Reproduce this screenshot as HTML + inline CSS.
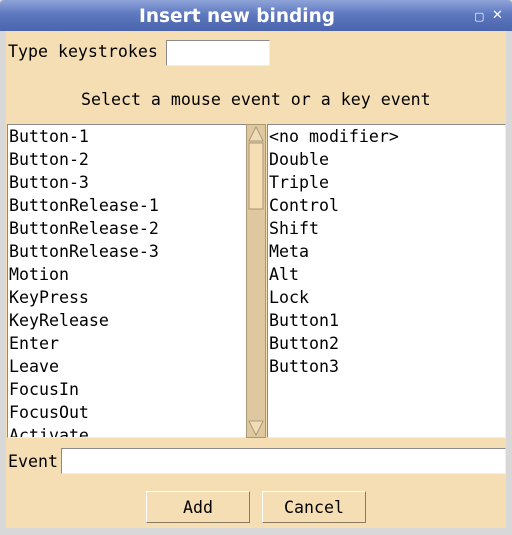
<!DOCTYPE html>
<html><head><style>
*{margin:0;padding:0;box-sizing:border-box}
body{width:512px;height:535px;overflow:hidden;background:#d8d8d8;font-family:"DejaVu Sans Mono","Liberation Mono",monospace;font-size:16.6px;color:#000;position:relative}
.title{position:absolute;left:0;top:0;width:512px;height:31px;background:linear-gradient(#8ea3d8,#5f79c0 45%,#4a64ad);border-radius:4px 4px 0 0}
.tt{position:absolute;left:0;width:474px;top:1px;text-align:center;color:#fff;font-family:"DejaVu Sans",sans-serif;font-weight:bold;font-size:18.5px;line-height:31px}
.ctl{position:absolute;top:9px;color:#fff;font-size:13px;font-family:"DejaVu Sans",sans-serif;line-height:13px}
.main{position:absolute;left:6px;top:31px;width:500px;height:497px;background:#f5deb3}
.abs{position:absolute;white-space:pre}
.entry{position:absolute;background:#fff;border:1px solid #8a8a8a;border-right-color:#eee;border-bottom-color:#eee}
.list{position:absolute;background:#fff;border:1px solid #8a8a8a;border-right-color:#eee;border-bottom-color:#eee;overflow:hidden;padding-top:1px}
.list div{height:23px;line-height:22px;padding-left:1px;white-space:pre}
.btn{position:absolute;top:460px;width:104px;height:32px;border:1px solid #fff;border-right-color:#8a7a60;border-bottom-color:#8a7a60;text-align:center;line-height:32px}
</style></head><body>
<div class="title"><div class="tt">Insert new binding</div></div>
<div class="ctl" style="left:474px;font-size:11px;top:10px">▢</div>
<div class="ctl" style="left:492px">✕</div>
<div class="main">
 <div class="abs" style="left:2px;top:9px;line-height:24px">Type keystrokes</div>
 <div class="entry" style="left:160px;top:9px;width:104px;height:26px"></div>
 <div class="abs" style="left:75px;top:57px;line-height:24px">Select a mouse event or a key event</div>
 <div class="list" style="left:1px;top:93px;width:240px;height:314px">
  <div>Button-1</div><div>Button-2</div><div>Button-3</div><div>ButtonRelease-1</div><div>ButtonRelease-2</div><div>ButtonRelease-3</div><div>Motion</div><div>KeyPress</div><div>KeyRelease</div><div>Enter</div><div>Leave</div><div>FocusIn</div><div>FocusOut</div><div>Activate</div>
 </div>
 <div style="position:absolute;left:240px;top:93px;width:20px;height:314px;background:#dfc8a0;border:1px solid #a89878">
  <svg width="18" height="312" style="position:absolute;left:0;top:0">
   <polygon points="9,2 16,16 2,16" fill="#efdcb8" stroke="#9a8a6a" stroke-width="0.8"/>
   <rect x="2" y="18" width="14" height="66" fill="#f5deb3" stroke="#a89878"/>
   <polygon points="2,296 16,296 9,310" fill="#efdcb8" stroke="#9a8a6a" stroke-width="0.8"/>
  </svg>
 </div>
 <div class="list" style="left:261px;top:93px;width:239px;height:314px">
  <div>&lt;no modifier&gt;</div><div>Double</div><div>Triple</div><div>Control</div><div>Shift</div><div>Meta</div><div>Alt</div><div>Lock</div><div>Button1</div><div>Button2</div><div>Button3</div>
 </div>
 <div class="abs" style="left:2px;top:419px;line-height:24px">Event</div>
 <div class="entry" style="left:55px;top:417px;width:445px;height:26px"></div>
 <div class="btn" style="left:140px">Add</div>
 <div class="btn" style="left:256px">Cancel</div>
</div>
</body></html>
